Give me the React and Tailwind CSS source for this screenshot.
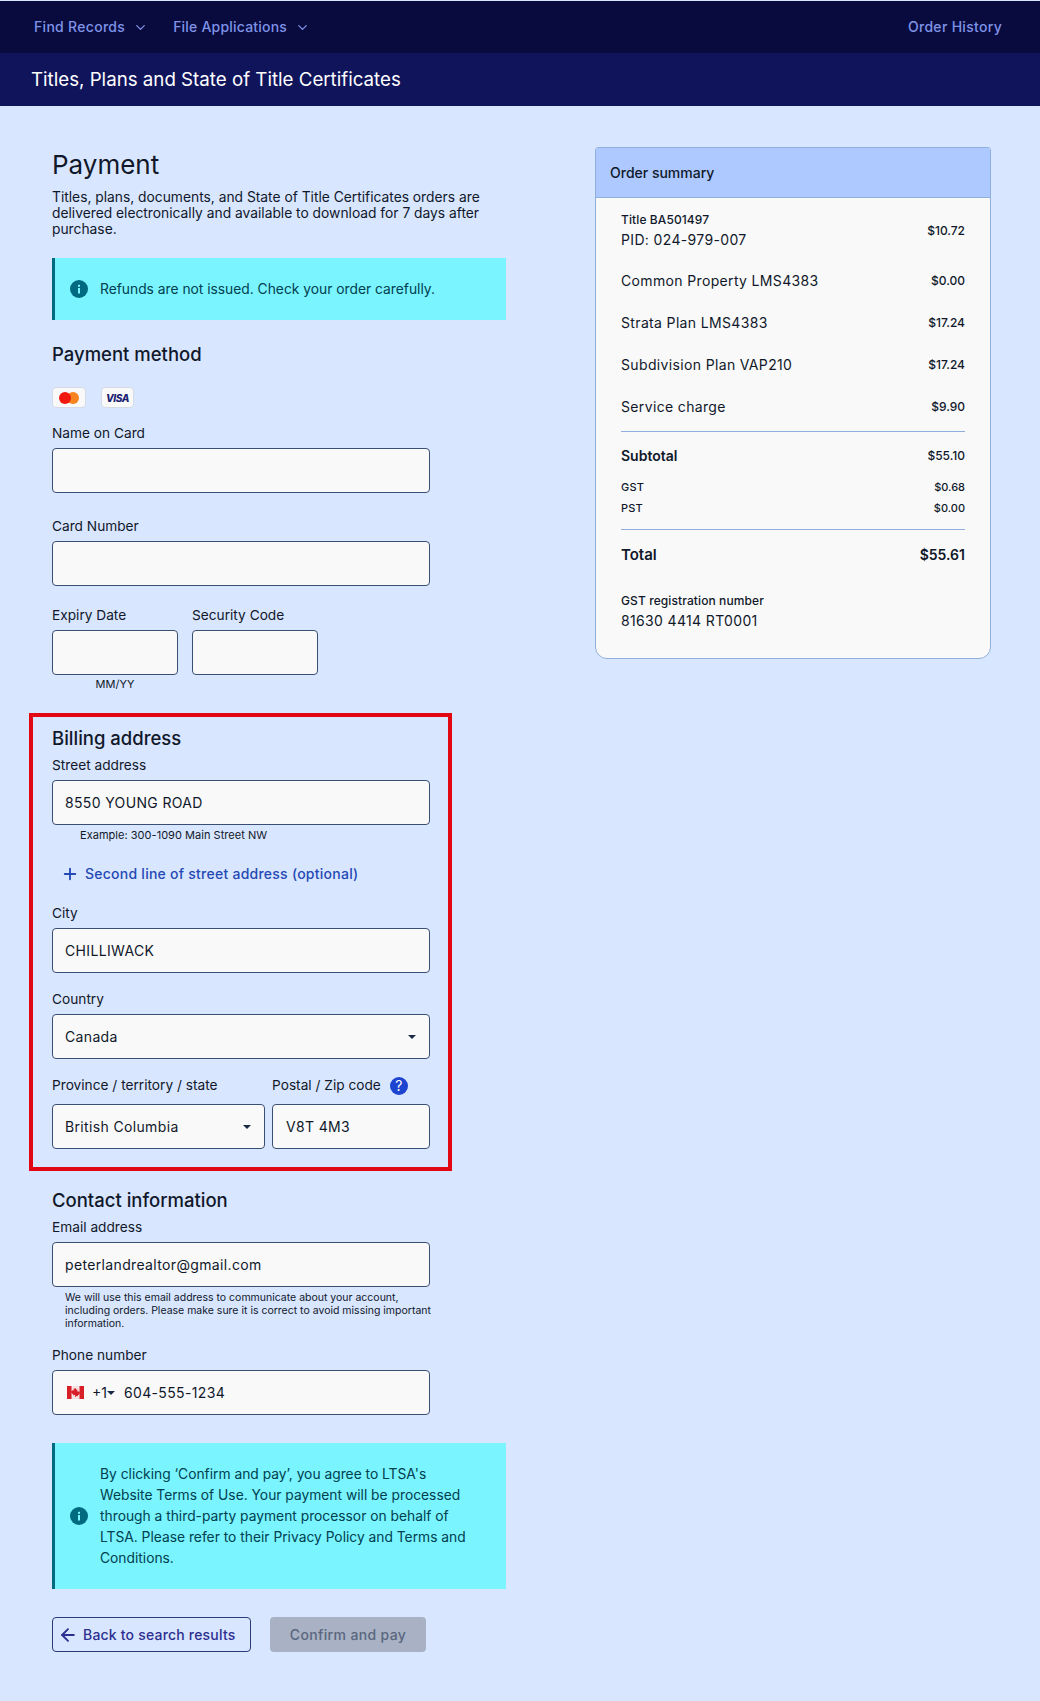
import { ChevronDown, Plus, ArrowLeft } from "lucide-react";

const InfoIcon = () => (
  <svg width="18" height="18" viewBox="0 0 18 18" className="shrink-0">
    <circle cx="9" cy="9" r="9" fill="#006a80" />
    <rect x="8" y="8" width="2" height="5.5" fill="#7af4ff" />
    <rect x="8" y="4.8" width="2" height="2" fill="#7af4ff" />
  </svg>
);

const Caret = () => (
  <svg width="8" height="4" viewBox="0 0 8 4" className="shrink-0">
    <path d="M0 0h8L4 4z" fill="#1b2a44" />
  </svg>
);

const CanadaFlag = () => (
  <svg width="17" height="13" viewBox="0 0 17 13" className="shrink-0">
    <rect width="17" height="13" fill="#f7e3e3" />
    <rect width="4.5" height="13" fill="#d81e26" />
    <rect x="12.5" width="4.5" height="13" fill="#d81e26" />
    <path d="M8.5 2l1 1.8 1-.4-.4 2.2 1.4-.6.3 1 1.2-.2-.5 1.6.5.4-2.3 1.6.2.9-2-.2V11h-.8V9.1l-2 .2.2-.9-2.3-1.6.5-.4-.5-1.6 1.2.2.3-1 1.4.6-.4-2.2 1 .4z" fill="#d81e26" />
  </svg>
);

const Label = ({ children, className = "" }) => (
  <label className={`block text-[13.7px] leading-[17px] text-[#10182a] ${className}`}>{children}</label>
);

const Box = ({ children, className = "" }) => (
  <div className={`flex h-[45px] items-center rounded border border-[#3a4f73] bg-[#f9f9f9] pl-[12px] pr-[13px] text-sm tracking-[0.35px] text-[#10182a] ${className}`}>
    {children}
  </div>
);

const Notice = ({ children, className = "" }) => (
  <div className={`flex w-[454px] items-center border-l-[3px] border-[#006a80] bg-[#7af4ff] pl-[15px] pr-[30px] text-[13.8px] leading-[21px] text-[#00404f] ${className}`}>
    <InfoIcon />
    <p className="ml-[12px]">{children}</p>
  </div>
);

const SummaryRow = ({ label, price, className = "" }) => (
  <div className={`flex items-center justify-between ${className}`}>
    <span className="text-sm tracking-[0.35px]">{label}</span>
    <span className="text-xs font-medium">{price}</span>
  </div>
);

export default function App() {
  return (
    <div className="min-h-[1701px] bg-[#d9e6ff] font-['Inter',sans-serif] text-[#10182a]">
      <div className="flex h-[53px] items-center justify-between border-t border-[#d9e6ff] bg-[#090b3f] pl-[34px] pr-[38px] text-sm font-medium tracking-[0.3px] text-[#7f93e8]">
        <div className="flex items-center">
          <span>Find Records</span>
          <ChevronDown size={15} strokeWidth={2} className="ml-[8px]" />
          <span className="ml-[25px] tracking-[0.2px]">File Applications</span>
          <ChevronDown size={15} strokeWidth={2} className="ml-[8px]" />
        </div>
        <span>Order History</span>
      </div>
      <div className="flex h-[53px] items-center bg-[#10145b] pl-[31px] pt-[2px] text-[18.72px] text-white">
        Titles, Plans and State of Title Certificates
      </div>

      <div className="flex pl-[52px]">
        <div className="w-[454px] pt-[41px]">
          <h1 className="text-[26px] leading-[36px]">Payment</h1>
          <p className="mt-[6px] w-[440px] text-[13.8px] leading-4">
            Titles, plans, documents, and State of Title Certificates orders are delivered electronically and available to download for 7 days after purchase.
          </p>
          <Notice className="mt-[21px] h-[62px]">Refunds are not issued. Check your order carefully.</Notice>

          <h2 className="mt-[22px] text-[18.5px] font-medium leading-[24px]">Payment method</h2>
          <div className="mt-[21px] flex gap-[15px]">
            <div className="flex h-[21px] w-[34px] items-center justify-center rounded-sm border border-[#d5dbe6] bg-[#f9f9f9]">
              <svg width="20" height="12" viewBox="0 0 20 12">
                <circle cx="14" cy="6" r="6" fill="#f7831e" />
                <circle cx="6" cy="6" r="6" fill="#f0180f" />
              </svg>
            </div>
            <div className="flex h-[21px] w-[33px] items-center justify-center rounded-sm border border-[#d5dbe6] bg-[#f9f9f9] text-[10px] font-extrabold italic leading-none tracking-[-0.4px] text-[#1a2071]">
              VISA
            </div>
          </div>

          <Label className="mt-[17px]">Name on Card</Label>
          <Box className="mt-[6px] w-[378px]" />

          <Label className="mt-[25px]">Card Number</Label>
          <Box className="mt-[6px] w-[378px]" />

          <div className="mt-[21px] flex gap-[14px]">
            <div className="w-[126px]">
              <Label>Expiry Date</Label>
              <Box className="mt-[6px]" />
              <p className="mt-[2px] text-center text-[11px] leading-[14px]">MM/YY</p>
            </div>
            <div className="w-[126px]">
              <Label>Security Code</Label>
              <Box className="mt-[6px]" />
            </div>
          </div>

          <section className="-ml-[23px] mt-[22px] h-[458px] w-[423px] border-4 border-[#e30613] pl-[19px] pr-[18px]">
            <h2 className="mt-[9px] text-[18.5px] font-medium leading-[24px]">Billing address</h2>
            <Label className="mt-[7px]">Street address</Label>
            <Box className="mt-[6px]">8550 YOUNG ROAD</Box>
            <p className="ml-[28px] mt-[3px] text-[11px] leading-[14px] tracking-[0.03px]">Example: 300-1090 Main Street NW</p>
            <div className="ml-[9px] mt-[23px] flex h-[18px] items-center text-sm font-medium tracking-[0.25px] text-[#2449b5]">
              <Plus size={18} strokeWidth={2.5} />
              <span className="ml-[6px]">Second line of street address (optional)</span>
            </div>
            <Label className="mt-[22px]">City</Label>
            <Box className="mt-[6px]">CHILLIWACK</Box>
            <Label className="mt-[18px]">Country</Label>
            <Box className="mt-[6px] justify-between">
              <span>Canada</span>
              <Caret />
            </Box>
            <div className="mt-[16px] flex gap-[7px]">
              <div className="w-[213px]">
                <Label className="flex h-[20px] items-center">Province / territory / state</Label>
                <Box className="mt-[9px] justify-between">
                  <span>British Columbia</span>
                  <Caret />
                </Box>
              </div>
              <div className="w-[158px]">
                <Label className="flex h-[20px] items-center">
                  Postal / Zip code
                  <span className="ml-[9px] mt-[2px] flex h-[18px] w-[18px] items-center justify-center rounded-full bg-[#1c44d0] text-sm leading-none text-white">?</span>
                </Label>
                <Box className="mt-[9px] pl-[13px]">V8T 4M3</Box>
              </div>
            </div>
          </section>

          <h2 className="mt-[17px] text-[18.5px] font-medium leading-[24px]">Contact information</h2>
          <Label className="mt-[7px]">Email address</Label>
          <Box className="mt-[6px] w-[378px]">peterlandrealtor@gmail.com</Box>
          <p className="ml-[13px] mt-[4px] w-[372px] text-[10.5px] leading-[13px]">
            We will use this email address to communicate about your account, including orders. Please make sure it is correct to avoid missing important information.
          </p>
          <Label className="mt-[17px]">Phone number</Label>
          <Box className="mt-[6px] w-[378px] pl-[14px]">
            <CanadaFlag />
            <span className="ml-[8px] tracking-normal">+1</span>
            <Caret />
            <span className="ml-[9px]">604-555-1234</span>
          </Box>

          <Notice className="mt-[28px] h-[146px]">
            By clicking ‘Confirm and pay’, you agree to LTSA's Website Terms of Use. Your payment will be processed through a third-party payment processor on behalf of LTSA. Please refer to their Privacy Policy and Terms and Conditions.
          </Notice>

          <div className="mt-[28px] flex gap-[19px] text-sm font-medium tracking-[0.2px]">
            <div className="flex h-[35px] w-[199px] items-center rounded-sm border border-[#2c3a78] pl-[5px] text-[#2c2f8f]">
              <ArrowLeft size={20} strokeWidth={2.25} />
              <span className="ml-[5px]">Back to search results</span>
            </div>
            <div className="flex h-[35px] w-[156px] items-center justify-center rounded-sm bg-[#a8b2c4] tracking-[0.35px] text-[#5a667d]">
              Confirm and pay
            </div>
          </div>
        </div>

        <aside className="ml-[89px] mt-[41px] h-[512px] w-[396px] overflow-hidden rounded-t-[3px] rounded-b-[12px] border border-[#8fb0dd] bg-[#f9f9f9]">
          <div className="flex h-[50px] items-center border-b border-[#8fb0dd] bg-[#adc9ff] pl-[14px] text-sm font-medium">Order summary</div>
          <div className="px-[25px] pt-[14px]">
            <div className="flex items-center justify-between">
              <div>
                <p className="text-xs font-medium leading-[16px] tracking-[0.1px]">Title BA501497</p>
                <p className="mt-[2px] text-sm leading-[20px] tracking-[0.35px]">PID: 024-979-007</p>
              </div>
              <span className="text-xs font-medium">$10.72</span>
            </div>
            <SummaryRow className="mt-[21px] h-[20px]" label="Common Property LMS4383" price="$0.00" />
            <SummaryRow className="mt-[22px] h-[20px]" label="Strata Plan LMS4383" price="$17.24" />
            <SummaryRow className="mt-[22px] h-[20px]" label="Subdivision Plan VAP210" price="$17.24" />
            <SummaryRow className="mt-[22px] h-[20px]" label="Service charge" price="$9.90" />
            <hr className="mt-[14px] border-[#8fb0dd]" />
            <div className="mt-[14px] flex h-[20px] items-center justify-between font-medium">
              <span className="text-sm font-semibold">Subtotal</span>
              <span className="text-xs">$55.10</span>
            </div>
            <div className="mt-[13px] flex h-[16px] items-center justify-between text-[11px] font-medium">
              <span className="tracking-[0.2px]">GST</span>
              <span>$0.68</span>
            </div>
            <div className="mt-[5px] flex h-[16px] items-center justify-between text-[11px] font-medium">
              <span className="tracking-[0.2px]">PST</span>
              <span>$0.00</span>
            </div>
            <hr className="mt-[13px] border-[#8fb0dd]" />
            <div className="mt-[15px] flex h-[20px] items-center justify-between font-semibold">
              <span className="text-[15px]">Total</span>
              <span className="text-sm">$55.61</span>
            </div>
            <p className="mt-[28px] text-xs font-medium leading-[16px] tracking-[0.1px]">GST registration number</p>
            <p className="mt-[2px] text-sm leading-[20px] tracking-[0.35px]">81630 4414 RT0001</p>
          </div>
        </aside>
      </div>
    </div>
  );
}
